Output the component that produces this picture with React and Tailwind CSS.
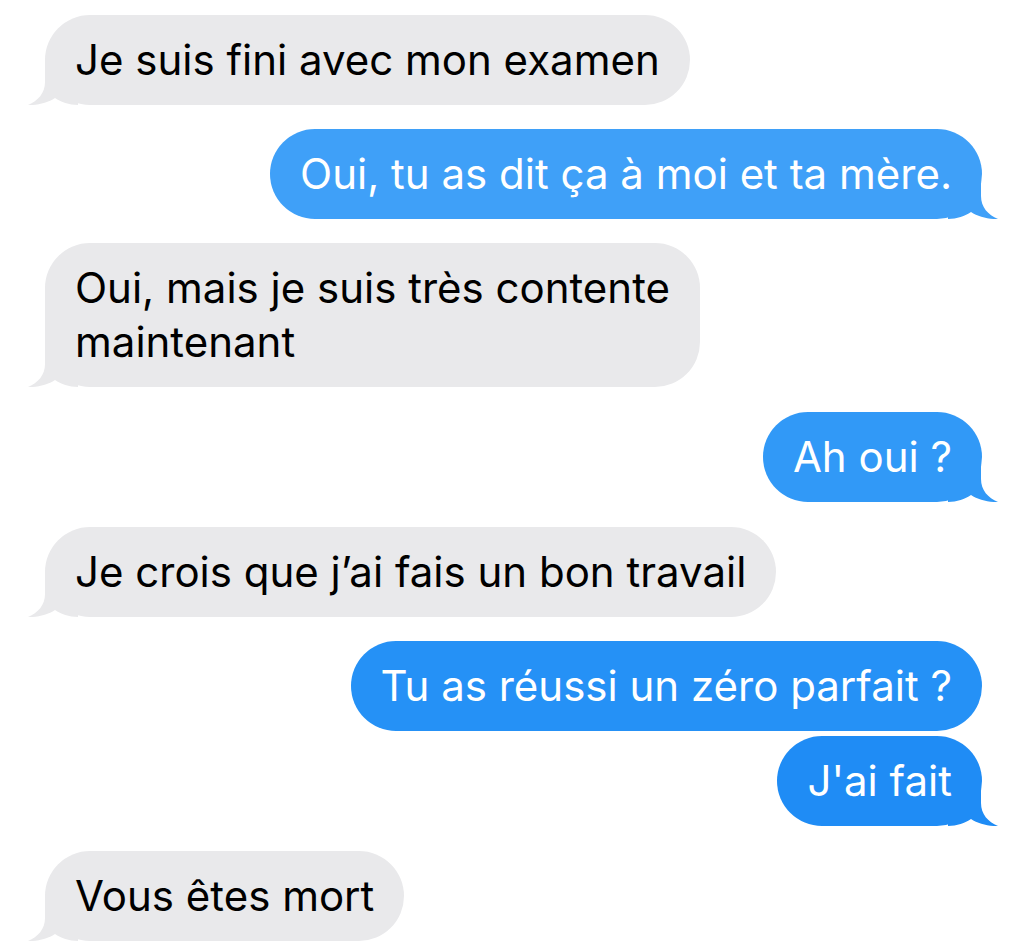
import React from 'react'

const messages = [
    { from: 'them', text: ['Je suis fini avec mon examen'], tail: true, gap: 'mt-[15px]' },
    { from: 'me', text: ['Oui, tu as dit ça à moi et ta mère.'], tail: true, gap: 'mt-[24px]', bg: 'bg-[#3fa0f8]', fill: '#3fa0f8' },
    { from: 'them', text: ['Oui, mais je suis très contente', 'maintenant'], tail: true, gap: 'mt-[24px]' },
    { from: 'me', text: ['Ah oui ?'], tail: true, gap: 'mt-[25px]', bg: 'bg-[#3199f7]', fill: '#3199f7' },
    { from: 'them', text: ['Je crois que j’ai fais un bon travail'], tail: true, gap: 'mt-[25px]' },
    { from: 'me', text: ['Tu as réussi un zéro parfait ?'], tail: false, gap: 'mt-[24px]', bg: 'bg-[#2591f6]', fill: '#2591f6' },
    { from: 'me', text: ["J'ai fait"], tail: true, gap: 'mt-[5px]', bg: 'bg-[#1f8cf5]', fill: '#1f8cf5' },
    { from: 'them', text: ['Vous êtes mort'], tail: true, gap: 'mt-[25px]' },
]

function Tail({ side, fill }) {
    // little curl at the bottom corner of the bubble
    if (side === 'left') {
        return (
            <svg className="absolute bottom-0 left-[-17px]" width="50" height="45" viewBox="0 0 50 45">
                <path d="M17 0 L17 22 C17 33 10 41 0 45 C10 45.5 20 42.5 27 38 C33 42 41 45 50 45 L50 0 Z" fill={fill} />
            </svg>
        )
    }
    return (
        <svg className="absolute bottom-0 right-[-16px]" width="50" height="45" viewBox="0 0 50 45">
            <path d="M33 0 L33 22 C33 33 40 41 50 45 C40 45.5 30 42.5 23 38 C17 42 9 45 0 45 L0 0 Z" fill={fill} />
        </svg>
    )
}

function Bubble({ msg }) {
    const mine = msg.from === 'me'
    const bg = mine ? msg.bg : 'bg-[#e9e9eb]'
    const fill = mine ? msg.fill : '#e9e9eb'
    return (
        <div className={`flex ${mine ? 'justify-end pr-[42px]' : 'justify-start pl-[45px]'} ${msg.gap}`}>
            <div className={`relative rounded-[45px] px-[30px] py-[18px] text-[42px] leading-[54px] ${bg} ${mine ? 'text-white' : 'text-black'}`}>
                {msg.tail && <Tail side={mine ? 'right' : 'left'} fill={fill} />}
                <div className="relative whitespace-nowrap">
                    {msg.text.map((line) => <div key={line}>{line}</div>)}
                </div>
            </div>
        </div>
    )
}

export default function App() {
    return (
        <div className="w-[1024px] h-[950px] bg-white overflow-hidden font-['Inter','Roboto',sans-serif]">
            {messages.map((m, i) => <Bubble key={i} msg={m} />)}
        </div>
    )
}
